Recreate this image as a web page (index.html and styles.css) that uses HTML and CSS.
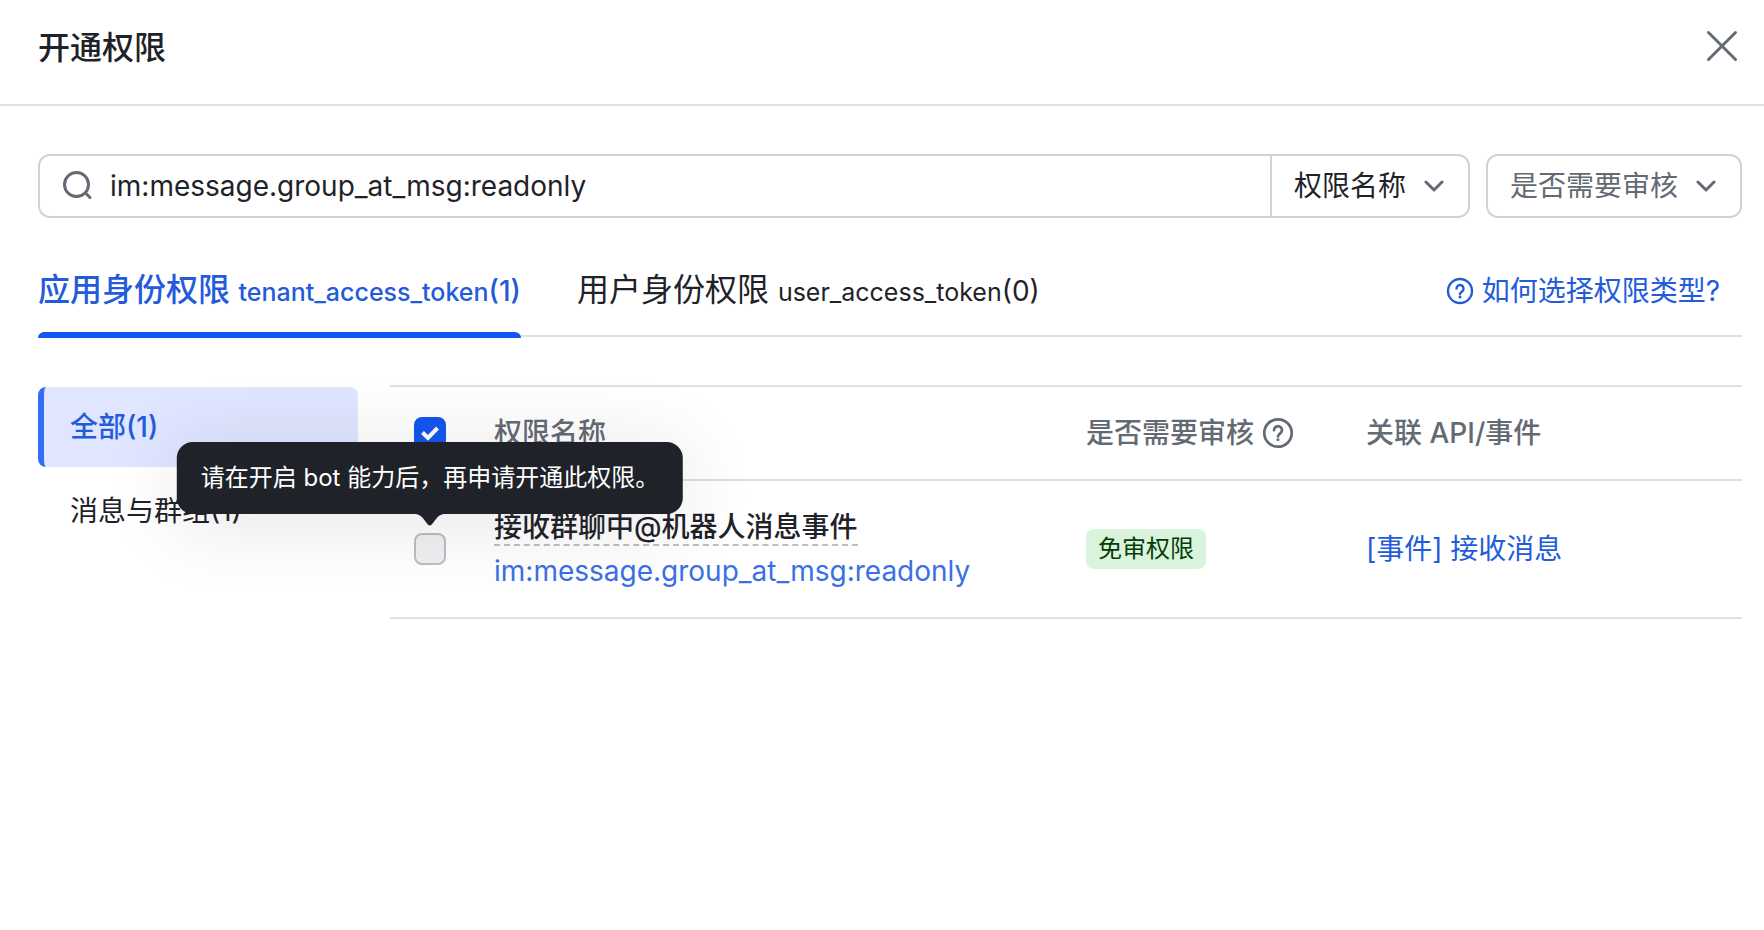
FILE: index.html
```html
<!DOCTYPE html>
<html lang="zh-CN">
<head>
    <meta charset="UTF-8">
    <meta name="viewport" content="width=device-width, initial-scale=1.0">
    <title>开通权限</title>
    <link rel="stylesheet" href="styles.css">
</head>
<body>
    <header class="header">
        <h1>开通权限</h1>
        <button class="close-btn" type="button" aria-label="关闭">
            <svg width="36" height="36" viewBox="0 0 36 36"><path d="M4.500 4.500l27 27M31.500 4.500l-27 27"/></svg>
        </button>
    </header>

    <main class="content">
        <div class="filters">
            <div class="search-group">
                <label class="search-box">
                    <svg class="search-icon" width="32" height="32" viewBox="0 0 32 32"><circle cx="14.500" cy="14.500" r="12"/><path d="M23.500 23l4.500 4.500"/></svg>
                    <input type="text" aria-label="搜索权限" value="im:message.group_at_msg:readonly">
                </label>
                <div class="select-box">
                    <select aria-label="搜索类型">
                        <option>权限名称</option>
                    </select>
                    <svg class="chevron" width="20" height="12" viewBox="0 0 20 12"><path d="M2 2l8 8 8-8"/></svg>
                </div>
            </div>
            <div class="select-box review-select">
                <select aria-label="是否需要审核">
                    <option>是否需要审核</option>
                </select>
                <svg class="chevron" width="20" height="12" viewBox="0 0 20 12"><path d="M2 2l8 8 8-8"/></svg>
            </div>
        </div>

        <div class="tab-bar">
            <div class="tabs" role="tablist">
                <button class="tab active" type="button" role="tab" aria-selected="true">应用身份权限 <span class="token">tenant_access_token</span><span class="count">(1)</span></button>
                <button class="tab" type="button" role="tab" aria-selected="false">用户身份权限 <span class="token">user_access_token</span><span class="count">(0)</span></button>
            </div>
            <a class="help-link" href="#">
                <svg class="help-icon" width="28" height="28" viewBox="0 0 28 28"><circle cx="14" cy="14" r="12"/><path d="M10.500 11.500a3.500 3.500 0 1 1 5.500 2.900c-1.300.9-2 1.400-2 2.600"/><circle class="dot" cx="14" cy="20" r="1.500"/></svg>
                如何选择权限类型?
            </a>
        </div>

        <div class="panel">
            <nav class="sidebar">
                <a class="side-item active" href="#">全部(1)</a>
                <a class="side-item" href="#">消息与群组(1)</a>
            </nav>

            <table class="scope-table">
                <thead>
                    <tr>
                        <th class="col-check">
                            <span class="checkbox">
                                <input type="checkbox" aria-label="全选" checked>
                                <svg width="32" height="32" viewBox="0 0 32 32"><path d="M8.500 15.500l5.500 5.500 9.500-10"/></svg>
                            </span>
                        </th>
                        <th>权限名称</th>
                        <th class="col-review">
                            <span class="th-label">是否需要审核
                                <svg class="help-icon" width="32" height="32" viewBox="0 0 28 28"><circle cx="14" cy="14" r="12"/><path d="M10.500 11.500a3.500 3.500 0 1 1 5.500 2.900c-1.300.9-2 1.400-2 2.600"/><circle class="dot" cx="14" cy="20" r="1.300"/></svg>
                            </span>
                        </th>
                        <th class="col-api">关联 API/事件</th>
                    </tr>
                </thead>
                <tbody>
                    <tr>
                        <td>
                            <span class="checkbox">
                                <input type="checkbox" aria-label="选择此权限" aria-describedby="botTip" disabled>
                                <span class="tooltip" id="botTip" role="tooltip">请在开启 bot 能力后，再申请开通此权限。
                                    <svg class="tooltip-arrow" width="32" height="12" viewBox="0 0 32 12"><path d="M0 0h32c-5 0-7 2-9 4l-5 6.500q-2 2-4 0L9 4C7 2 5 0 0 0z"/></svg>
                                </span>
                            </span>
                        </td>
                        <td>
                            <div class="scope-name"><span>接收群聊中@机器人消息事件</span></div>
                            <div class="scope-key">im:message.group_at_msg:readonly</div>
                        </td>
                        <td><span class="badge">免审权限</span></td>
                        <td><a class="api-link" href="#">[事件] 接收消息</a></td>
                    </tr>
                </tbody>
            </table>
        </div>
    </main>
</body>
</html>
```
FILE: styles.css
```css
:root {
    --primary: #1456f0;
    --link: #245bdb;
    --text: #1f2329;
    --muted: #646a73;
    --line: #dee0e3;
    --border: #d0d3d6;
}

* {
    box-sizing: border-box;
}

body {
    margin: 0;
    background: #fff;
    color: var(--text);
    font-family: Inter, "Noto Sans CJK SC", sans-serif;
    font-size: 28px;
    line-height: 44px;
}

a {
    color: var(--link);
    text-decoration: none;
}

button,
input,
select {
    font: inherit;
    color: inherit;
    background: none;
    border: none;
    margin: 0;
    padding: 0;
}

svg {
    flex: none;
    fill: none;
    stroke: currentColor;
    stroke-width: 3;
    stroke-linecap: round;
    stroke-linejoin: round;
}

.header {
    display: flex;
    align-items: flex-start;
    justify-content: space-between;
    padding: 25px 24px 33px 38px;
    border-bottom: 2px solid var(--line);
}

.header h1 {
    margin: 0;
    font-size: 32px;
    font-weight: 500;
    line-height: 46px;
}

.close-btn {
    display: flex;
    padding: 3px 0;
    color: var(--muted);
    cursor: pointer;
}

.content {
    padding: 48px 22px 0 38px;
}

.filters {
    display: flex;
    gap: 16px;
}

.search-group {
    display: flex;
    flex: 1;
    border: 2px solid var(--border);
    border-radius: 12px;
}

.search-box {
    display: flex;
    flex: 1;
    align-items: center;
    gap: 16px;
    padding: 0 22px;
}

.search-box input {
    flex: 1;
    outline: none;
}

.search-icon,
.chevron {
    color: var(--muted);
}

.select-box {
    display: grid;
    align-items: center;
    height: 60px;
    border-left: 2px solid var(--border);
}

.select-box select,
.select-box .chevron {
    grid-area: 1 / 1;
}

.select-box select {
    appearance: none;
    height: 60px;
    padding: 0 61px 0 22px;
    cursor: pointer;
}

.select-box .chevron {
    justify-self: end;
    margin-right: 24px;
    pointer-events: none;
}

.review-select {
    height: 64px;
    border: 2px solid var(--border);
    border-radius: 12px;
    color: var(--muted);
}

.tab-bar {
    display: flex;
    justify-content: space-between;
    margin-top: 49px;
    border-bottom: 2px solid var(--line);
}

.tabs {
    display: flex;
    gap: 56px;
    margin-bottom: -3px;
}

.tab {
    padding-bottom: 17px;
    border-bottom: 6px solid transparent;
    font-size: 32px;
    line-height: 46px;
    cursor: pointer;
}

.tab.active {
    position: relative;
    color: var(--link);
    font-weight: 500;
}

.tab.active::after {
    content: '';
    position: absolute;
    left: 0;
    right: 0;
    bottom: -6px;
    height: 6px;
    border-radius: 6px 6px 0 0;
    background: var(--primary);
}

.token {
    font-size: 25px;
}

.count {
    font-size: 28px;
}

.help-link {
    display: flex;
    align-items: center;
    gap: 8px;
    height: 48px;
    padding-right: 22px;
}

.help-icon {
    stroke-width: 2.4;
}

.help-icon .dot {
    fill: currentColor;
    stroke: none;
}

.panel {
    display: flex;
    align-items: flex-start;
    gap: 32px;
    margin-top: 48px;
}

.sidebar {
    display: flex;
    flex: none;
    flex-direction: column;
    gap: 4px;
    width: 320px;
    padding-top: 2px;
}

.side-item {
    padding: 18px 26px;
    border-left: 6px solid transparent;
    border-radius: 8px;
    color: var(--text);
}

.side-item.active {
    border-color: #336df4;
    background: #e0e6ff;
    color: var(--link);
    font-weight: 500;
}

.scope-table {
    flex: 1;
    table-layout: fixed;
    border-collapse: separate;
    border-spacing: 0;
    border-top: 2px solid var(--line);
}

.scope-table th,
.scope-table td {
    padding: 24px;
    border-bottom: 2px solid var(--line);
    text-align: left;
}

.scope-table th {
    color: var(--muted);
    font-weight: 500;
}

.scope-table .col-check {
    width: 80px;
}

.scope-table .col-review {
    width: 280px;
}

.scope-table .col-api {
    width: 400px;
}

.th-label {
    display: flex;
    align-items: center;
    gap: 8px;
    white-space: nowrap;
}

.checkbox {
    position: relative;
    display: grid;
    width: 32px;
    height: 32px;
}

.checkbox input {
    appearance: none;
    grid-area: 1 / 1;
    border: 2px solid #bbbfc4;
    border-radius: 8px;
}

.checkbox input:checked {
    border-color: var(--primary);
    background: var(--primary);
}

.checkbox input:disabled {
    background: #eff0f1;
}

.checkbox > svg {
    grid-area: 1 / 1;
    color: #fff;
    stroke-width: 4;
    stroke-linecap: butt;
    stroke-linejoin: miter;
    pointer-events: none;
}

.tooltip {
    position: absolute;
    bottom: calc(100% + 19px);
    left: 50%;
    z-index: 1;
    transform: translateX(-50%);
    padding: 14px 24px;
    border-radius: 16px;
    background: var(--text);
    box-shadow: 0 8px 80px rgba(31, 35, 41, 0.12);
    color: #fff;
    font-size: 24px;
    white-space: nowrap;
}

.tooltip-arrow {
    position: absolute;
    top: 100%;
    left: 50%;
    transform: translateX(-50%);
    fill: var(--text);
    stroke: none;
}

.scope-name {
    font-weight: 500;
}

.scope-name span {
    display: inline-block;
    line-height: 34px;
    border-bottom: 2px dashed #bbbfc4;
}

.scope-key {
    color: #3b6fe6;
}

.badge {
    display: block;
    width: fit-content;
    padding: 0 12px;
    border-radius: 8px;
    background: #d9f3dc;
    color: #043d07;
    font-size: 24px;
    line-height: 40px;
}
```
